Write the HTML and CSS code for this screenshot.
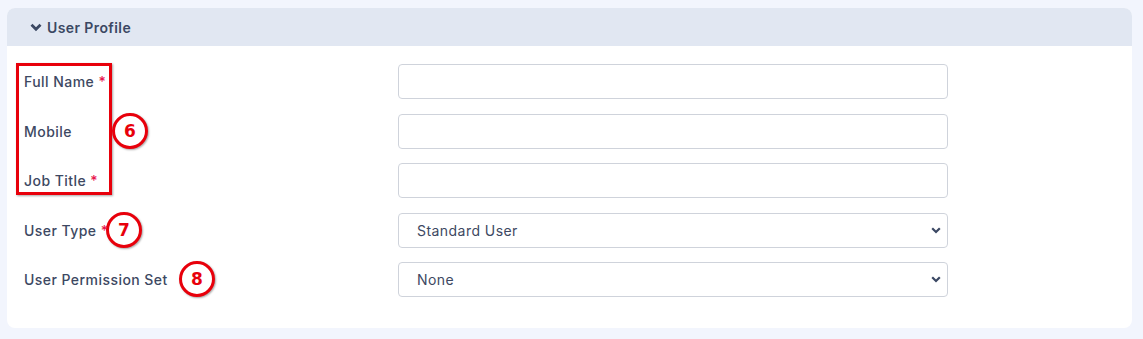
FILE: index.html
```html
<!DOCTYPE html>
<html lang="en">
<head>
    <meta charset="UTF-8">
    <title>User Profile</title>
    <link rel="stylesheet" href="styles.css">
</head>
<body>

    <div class="panel">
        <header class="panel-header">
            <svg class="chevron" width="12" height="9" viewBox="0 0 12 9">
                <path d="M1.5 1.8 L6 6.3 L10.5 1.8" fill="none" stroke="#3b4863" stroke-width="2.8"/>
            </svg>
            <span>User Profile</span>
        </header>

        <section class="panel-body">
            <div class="form-row">
                <label>Full Name <span class="req">*</span></label>
                <input type="text" class="field">
            </div>
            <div class="form-row">
                <label>Mobile</label>
                <input type="text" class="field">
            </div>
            <div class="form-row">
                <label>Job Title <span class="req">*</span></label>
                <input type="text" class="field">
            </div>
            <div class="form-row">
                <label>User Type <span class="req">*</span></label>
                <select class="field">
                    <option>Standard User</option>
                </select>
            </div>
            <div class="form-row">
                <label>User Permission Set</label>
                <select class="field">
                    <option>None</option>
                </select>
            </div>

            <!-- annotations -->
            <div class="mark-box"></div>
            <div class="mark mark-6">6</div>
            <div class="mark mark-7">7</div>
            <div class="mark mark-8">8</div>
        </section>
    </div>

</body>
</html>
```

FILE: styles.css
```css
/* General */
body {
    font-family: Inter, "Open Sans", Arial, sans-serif;
    background: #f2f5fd;
    margin: 0;
    padding: 8px 11px 11px 7px;
}

/* Panel */
.panel {
    background: #ffffff;
    border-radius: 8px;
    overflow: hidden;
}

.panel-header {
    background: #e1e7f2;
    height: 38px;
    display: flex;
    align-items: center;
    gap: 5px;
    padding-left: 23px;
    font-size: 14px;
    font-weight: 600;
    letter-spacing: 0.4px;
    color: #3b4863;
}

.chevron {
    margin-top: 1px;
}

.panel-body {
    position: relative;
    padding: 18px 0 31px 17px;
    display: flex;
    flex-direction: column;
    gap: 14.5px;
}

/* Rows */
.form-row {
    display: flex;
    align-items: center;
    height: 35px;
}

.form-row label {
    width: 374px;
    font-size: 14px;
    font-weight: 500;
    letter-spacing: 0.45px;
    color: #3d4862;
}

.req {
    color: #e8174f;
}

.field {
    box-sizing: border-box;
    width: 550px;
    height: 35px;
    border: 1px solid #cfd3db;
    border-radius: 4px;
    background: #ffffff;
    font-family: inherit;
    font-size: 14px;
    letter-spacing: 0.45px;
    color: #3d4862;
    padding: 0 12px;
}

select.field {
    appearance: none;
    padding-left: 18px;
    background-image: url("data:image/svg+xml;utf8,<svg xmlns='http://www.w3.org/2000/svg' width='10' height='7' viewBox='0 0 10 7'><path d='M1.2 1.2 L5 5 L8.8 1.2' fill='none' stroke='%233b4863' stroke-width='2.2'/></svg>");
    background-repeat: no-repeat;
    background-position: right 6px center;
}

/* Annotations */
.mark-box {
    position: absolute;
    left: 9px;
    top: 17px;
    width: 90px;
    height: 126px;
    border: 3px solid #e8000b;
    box-shadow: 1px 1px 2px rgba(0, 0, 0, 0.35);
}

.mark {
    position: absolute;
    width: 30px;
    height: 30px;
    border: 3px solid #e8000b;
    border-radius: 50%;
    background: #ffffff;
    box-shadow: 1px 1px 2px rgba(0, 0, 0, 0.35);
    color: #e8000b;
    font-family: "DejaVu Sans", sans-serif;
    font-size: 17px;
    font-weight: 700;
    display: flex;
    align-items: center;
    justify-content: center;
}

.mark-6 { left: 105px; top: 67px; }
.mark-7 { left: 99px;  top: 166px; }
.mark-8 { left: 172px; top: 215px; }
```
